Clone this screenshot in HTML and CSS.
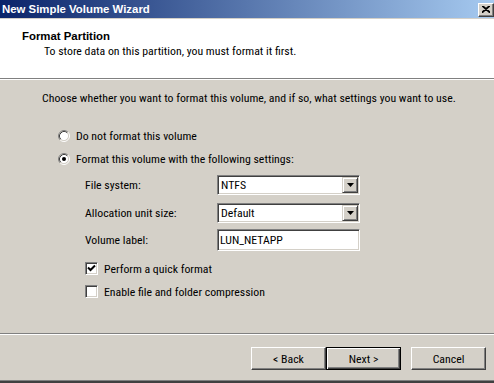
FILE: index.html
```html
<!DOCTYPE html>
<html lang="en">
<head>
    <meta charset="UTF-8">
    <title>New Simple Volume Wizard</title>
    <link rel="stylesheet" href="styles.css">
</head>
<body>
    <div class="wizard">
        <div class="titlebar">
            <span class="title">New Simple Volume Wizard</span>
            <span class="close">
                <svg width="8" height="7" viewBox="0 0 8 7"><path d="M0 0 L8 7 M1 0 L8 6 M8 0 L0 7 M7 0 L0 6" stroke="#000" stroke-width="1.2" fill="none"/></svg>
            </span>
        </div>

        <div class="header">
            <h1>Format Partition</h1>
            <p>To store data on this partition, you must format it first.</p>
        </div>

        <div class="content">
            <p class="intro">Choose whether you want to format this volume, and if so, what settings you want to use.</p>

            <div class="options">
                <div class="radio">
                    <svg width="12" height="12" viewBox="0 0 12 12">
                        <circle cx="6" cy="6" r="4.5" fill="#fff"/>
                        <path d="M2.11 9.89 A5.5 5.5 0 0 1 9.89 2.11" stroke="#808080" fill="none"/>
                        <path d="M9.89 2.11 A5.5 5.5 0 0 1 2.11 9.89" stroke="#fff" fill="none"/>
                        <path d="M2.82 9.18 A4.5 4.5 0 0 1 9.18 2.82" stroke="#404040" fill="none"/>
                        <path d="M9.18 2.82 A4.5 4.5 0 0 1 2.82 9.18" stroke="#d4d0c8" fill="none"/>
                    </svg>
                    <span>Do not format this volume</span>
                </div>
                <div class="radio">
                    <svg width="12" height="12" viewBox="0 0 12 12">
                        <circle cx="6" cy="6" r="4.5" fill="#fff"/>
                        <path d="M2.11 9.89 A5.5 5.5 0 0 1 9.89 2.11" stroke="#808080" fill="none"/>
                        <path d="M9.89 2.11 A5.5 5.5 0 0 1 2.11 9.89" stroke="#fff" fill="none"/>
                        <path d="M2.82 9.18 A4.5 4.5 0 0 1 9.18 2.82" stroke="#404040" fill="none"/>
                        <path d="M9.18 2.82 A4.5 4.5 0 0 1 2.82 9.18" stroke="#d4d0c8" fill="none"/>
                        <circle cx="6" cy="6" r="2" fill="#000"/>
                    </svg>
                    <span>Format this volume with the following settings:</span>
                </div>
            </div>

            <div class="settings">
                <div class="field">
                    <span class="label">File system:</span>
                    <div class="select">
                        <span class="value">NTFS</span>
                        <span class="arrow"><svg width="7" height="4" viewBox="0 0 7 4"><path d="M0 0 H7 L3.5 4 Z" fill="#000"/></svg></span>
                    </div>
                </div>
                <div class="field second">
                    <span class="label">Allocation unit size:</span>
                    <div class="select">
                        <span class="value">Default</span>
                        <span class="arrow"><svg width="7" height="4" viewBox="0 0 7 4"><path d="M0 0 H7 L3.5 4 Z" fill="#000"/></svg></span>
                    </div>
                </div>
                <div class="field third">
                    <span class="label">Volume label:</span>
                    <div class="textbox">LUN_NETAPP</div>
                </div>
            </div>

            <div class="checks">
                <div class="check">
                    <span class="box">
                        <svg width="9" height="9" viewBox="0 0 9 9"><path d="M1 3.5 L3.5 6 L8 1.5" stroke="#000" stroke-width="2" fill="none"/></svg>
                    </span>
                    <span>Perform a quick format</span>
                </div>
                <div class="check">
                    <span class="box"></span>
                    <span>Enable file and folder compression</span>
                </div>
            </div>
        </div>

        <div class="footer">
            <button class="btn">&lt; Back</button>
            <button class="btn default">Next &gt;</button>
            <button class="btn cancel">Cancel</button>
        </div>
    </div>
</body>
</html>
```
FILE: styles.css
```css
body {
    margin: 0;
    font-family: "Roboto Condensed", "Liberation Sans", sans-serif;
    font-size: 11.8px;
    line-height: 14px;
    color: #000;
    background: #d4d0c8;
}
.wizard {
    width: 494px;
    height: 383px;
    display: flex;
    flex-direction: column;
    background: #d4d0c8;
}
.titlebar {
    height: 18px;
    display: flex;
    align-items: center;
    justify-content: space-between;
    background: linear-gradient(to right, #0a246a, #a6caf0);
    flex-shrink: 0;
}
.title {
    color: #fff;
    font-family: "Liberation Sans", sans-serif;
    font-size: 11.4px;
    font-weight: bold;
    padding-left: 2px;
    line-height: 18px;
}
.close {
    width: 16px;
    height: 14px;
    box-sizing: border-box;
    margin-top: 1px;
    display: flex;
    align-items: center;
    justify-content: center;
    background: #d4d0c8;
    border: 1px solid;
    border-color: #fff #404040 #404040 #fff;
    box-shadow: inset -1px -1px #808080;
}
.header {
    height: 61px;
    box-sizing: border-box;
    background: #fff;
    border-top: 1px solid #d4d0c8;
    border-bottom: 1px solid #808080;
    padding: 10px 0 0 22px;
    flex-shrink: 0;
}
.header h1 {
    margin: 0;
    font-family: "Liberation Sans", sans-serif;
    font-size: 11.4px;
    font-weight: bold;
}
.header p {
    margin: 1px 0 0 22px;
}
.content {
    height: 255px;
    box-sizing: border-box;
    border-top: 1px solid #fff;
    border-bottom: 1px solid #808080;
    padding-left: 42px;
    flex-shrink: 0;
}
.intro {
    margin: 11px 0 0;
}
.options {
    margin: 24px 0 0 16px;
    display: flex;
    flex-direction: column;
    gap: 9px;
}
.radio {
    display: flex;
    align-items: center;
    gap: 6px;
    height: 14px;
}
.settings {
    margin: 9px 0 0 43px;
}
.field {
    display: flex;
    align-items: center;
}
.field.second {
    margin-top: 8px;
}
.field.third {
    margin-top: 6px;
}
.label {
    width: 132px;
}
.select, .textbox {
    width: 143px;
    height: 20px;
    box-sizing: border-box;
    background: #fff;
    border: 1px solid;
    border-color: #808080 #fff #fff #808080;
    box-shadow: inset 1px 1px #404040, inset -1px -1px #d4d0c8;
    display: flex;
    align-items: center;
    padding: 0 1px 0 3px;
}
.textbox {
    height: 22px;
    padding-left: 2px;
}
.value {
    flex: 1;
}
.arrow {
    width: 16px;
    height: 16px;
    box-sizing: border-box;
    background: #d4d0c8;
    border: 1px solid;
    border-color: #d4d0c8 #404040 #404040 #d4d0c8;
    box-shadow: inset 1px 1px #fff, inset -1px -1px #808080;
    display: flex;
    align-items: center;
    justify-content: center;
}
.checks {
    margin: 11px 0 0 43px;
    display: flex;
    flex-direction: column;
    gap: 10px;
}
.check {
    display: flex;
    align-items: center;
    gap: 6px;
    height: 13px;
}
.box {
    width: 13px;
    height: 13px;
    box-sizing: border-box;
    background: #fff;
    border: 1px solid;
    border-color: #808080 #fff #fff #808080;
    box-shadow: inset 1px 1px #404040, inset -1px -1px #d4d0c8;
    display: flex;
    align-items: center;
    justify-content: center;
}
.footer {
    flex: 1;
    display: flex;
    justify-content: flex-end;
    align-items: flex-start;
    padding: 12px 8px 0 0;
    border-top: 1px solid #fff;
    border-bottom: 2px solid #404040;
    box-shadow: inset 0 -1px #808080;
}
.btn {
    width: 75px;
    height: 23px;
    box-sizing: border-box;
    font: inherit;
    color: #000;
    background: #d4d0c8;
    border: 1px solid;
    border-color: #fff #404040 #404040 #fff;
    box-shadow: inset -1px -1px #808080, inset 1px 1px #d4d0c8;
    padding: 0;
}
.btn.default {
    border-color: #000;
    box-shadow: inset 1px 1px #fff, inset -1px -1px #404040, inset -2px -2px #808080;
}
.btn.cancel {
    margin-left: 10px;
}
```
